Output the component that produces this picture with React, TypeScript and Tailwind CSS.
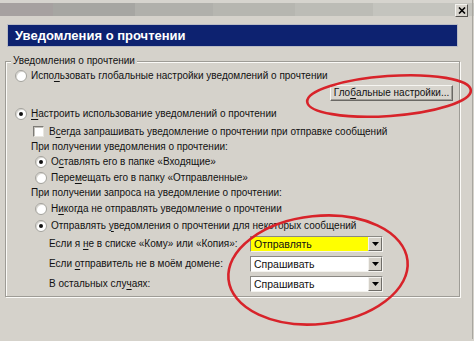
import React from "react";

const Radio = ({ checked }: { checked?: boolean }) => (
  <span className="relative flex h-[12px] w-[12px] shrink-0 items-center justify-center rounded-full border border-[#a3a29c] bg-white shadow-[inset_1px_1px_0_#d8d6d0]">
    {checked && <span className="h-[4px] w-[4px] rounded-full bg-[#111]" />}
  </span>
);

const Check = () => (
  <span className="h-[11px] w-[11px] shrink-0 border border-t-[#7d7b76] border-l-[#7d7b76] border-r-[#e8e6e0] border-b-[#e8e6e0] bg-white shadow-[inset_1px_1px_0_#c4c2bc]" />
);

const U = ({ children }: { children: React.ReactNode }) => <span className="underline underline-offset-2">{children}</span>;

const Combo = ({ value, yellow }: { value: string; yellow?: boolean }) => (
  <div className="flex h-[16px] w-[133px] border border-t-[#8a8883] border-l-[#8a8883] border-r-[#f4f3ef] border-b-[#f4f3ef] bg-white">
    <div className={`flex flex-1 items-center pl-[3px] text-[10.5px] ${yellow ? "bg-[#ffff00]" : "bg-white"}`}>{value}</div>
    <div className="flex w-[14px] items-center justify-center border border-t-[#f4f3ef] border-l-[#f4f3ef] border-r-[#6f6d68] border-b-[#6f6d68] bg-[#d4d0c8]">
      <svg width="7" height="4" viewBox="0 0 7 4"><path d="M0 0h7L3.5 4z" fill="#000" /></svg>
    </div>
  </div>
);

export default function App() {
  return (
    <div className="relative h-[341px] w-[474px] overflow-hidden whitespace-nowrap bg-[#d5d2cb] font-['Liberation_Sans',Arial,sans-serif] text-[10px] leading-[12px] text-[#111]">
      <div className="h-[3px] bg-[#d6d4ce]" />
      <div className="flex h-[13px]">
        <div className="w-[53px] bg-[#a6a1a0]" />
        <div className="w-[82px] bg-[#a6a6a2]" />
        <div className="w-[78px] bg-[#b0b0ab]" />
        <div className="w-[82px] bg-[#b6b6b0]" />
        <div className="w-[78px] bg-[#bcbcb6]" />
        <div className="flex-1 bg-[#c4c4be]" />
      </div>
      <div className="h-[8px]" />
      <div className="ml-[7px] flex h-[23px] w-[451px] items-center border border-[#b9bbc4] bg-[#0d2270] pl-[7px] text-[13px] font-bold text-white">
        Уведомления о прочтении
      </div>
      <div className="relative ml-[5px] mt-[14px] w-[455px] border border-[#9e9c96] pb-[4px] pl-[9px] pt-[6px] shadow-[inset_1px_1px_0_#fbfaf7,1px_1px_0_#fbfaf7]">
        <span className="absolute -top-[7px] left-[5px] bg-[#d5d2cb] px-[2px]">Уведомления о прочтении</span>
        <div className="flex h-[15px] items-center gap-[4px]">
          <Radio />
          <span>Испо<U>л</U>ьзовать глобальные настройки уведомлений о прочтении</span>
        </div>
        <div className="mt-[2px] flex justify-end pr-[6px]">
          <div className="flex h-[16px] w-[123px] items-center justify-center border border-t-[#f6f5f1] border-l-[#f6f5f1] border-r-[#6a6864] border-b-[#6a6864] bg-[#d8d5ce] shadow-[inset_-1px_-1px_0_#a09e98]">
            Гло<U>б</U>альные настройки...
          </div>
        </div>
        <div className="mt-[5px] flex h-[15px] items-center gap-[4px]">
          <Radio checked />
          <span><U>Н</U>астроить использование уведомлений о прочтении</span>
        </div>
        <div className="ml-[18px] mt-[3px] flex h-[15px] items-center gap-[5px]">
          <Check />
          <span>В<U>с</U>егда запрашивать уведомление о прочтении при отправке сообщений</span>
        </div>
        <div className="ml-[16px] flex h-[15px] items-center">При получении уведомления о прочтении:</div>
        <div className="ml-[20px] flex h-[15px] items-center gap-[4px]">
          <Radio checked />
          <span>О<U>с</U>тавлять его в папке «Входящие»</span>
        </div>
        <div className="ml-[20px] mt-[1px] flex h-[15px] items-center gap-[4px]">
          <Radio />
          <span>Пере<U>м</U>ещать его в папку «Отправленные»</span>
        </div>
        <div className="ml-[16px] flex h-[15px] items-center">При получении запроса на уведомление о прочтении:</div>
        <div className="ml-[20px] mt-[1px] flex h-[15px] items-center gap-[4px]">
          <Radio />
          <span>Н<U>и</U>когда не отправлять уведомление о прочтении</span>
        </div>
        <div className="ml-[20px] mt-[2px] flex h-[15px] items-center gap-[4px]">
          <Radio checked />
          <span>Отправлять <U>у</U>ведомления о прочтении для некоторых сообщений</span>
        </div>
        <div className="ml-[34px] mt-[3px] flex h-[16px] items-center">
          <span className="w-[201px]">Если я <U>н</U>е в списке «Кому» или «Копия»:</span>
          <Combo value="Отправлять" yellow />
        </div>
        <div className="ml-[34px] mt-[4px] flex h-[16px] items-center">
          <span className="w-[201px]">Если <U>о</U>тправитель не в моём домене:</span>
          <Combo value="Спрашивать" />
        </div>
        <div className="ml-[34px] mt-[4px] flex h-[16px] items-center">
          <span className="w-[201px]">В остальных слу<U>ч</U>аях:</span>
          <Combo value="Спрашивать" />
        </div>
      </div>
      <div className="absolute right-[1px] top-0 h-[339px] w-[1px] bg-[#a9a7a0]" />
      <div className="absolute right-[6px] top-[4px] flex h-[13px] w-[13px] items-center justify-center border border-t-[#f4f3ef] border-l-[#f4f3ef] border-r-[#55534f] border-b-[#55534f] bg-[#d6d3cc]">
        <svg width="8" height="7" viewBox="0 0 8 7"><path d="M1 0.5L7 6.5M7 0.5L1 6.5" stroke="#000" strokeWidth="1.6" /></svg>
      </div>
      <svg className="pointer-events-none absolute left-0 top-0" width="474" height="341" viewBox="0 0 474 341">
        <ellipse cx="389" cy="96" rx="82" ry="20" transform="rotate(-4 389 96)" fill="none" stroke="#d8232a" strokeWidth="2.6" />
        <ellipse cx="318" cy="270" rx="90" ry="54" transform="rotate(-6 318 270)" fill="none" stroke="#d8232a" strokeWidth="2.6" />
      </svg>
    </div>
  );
}
